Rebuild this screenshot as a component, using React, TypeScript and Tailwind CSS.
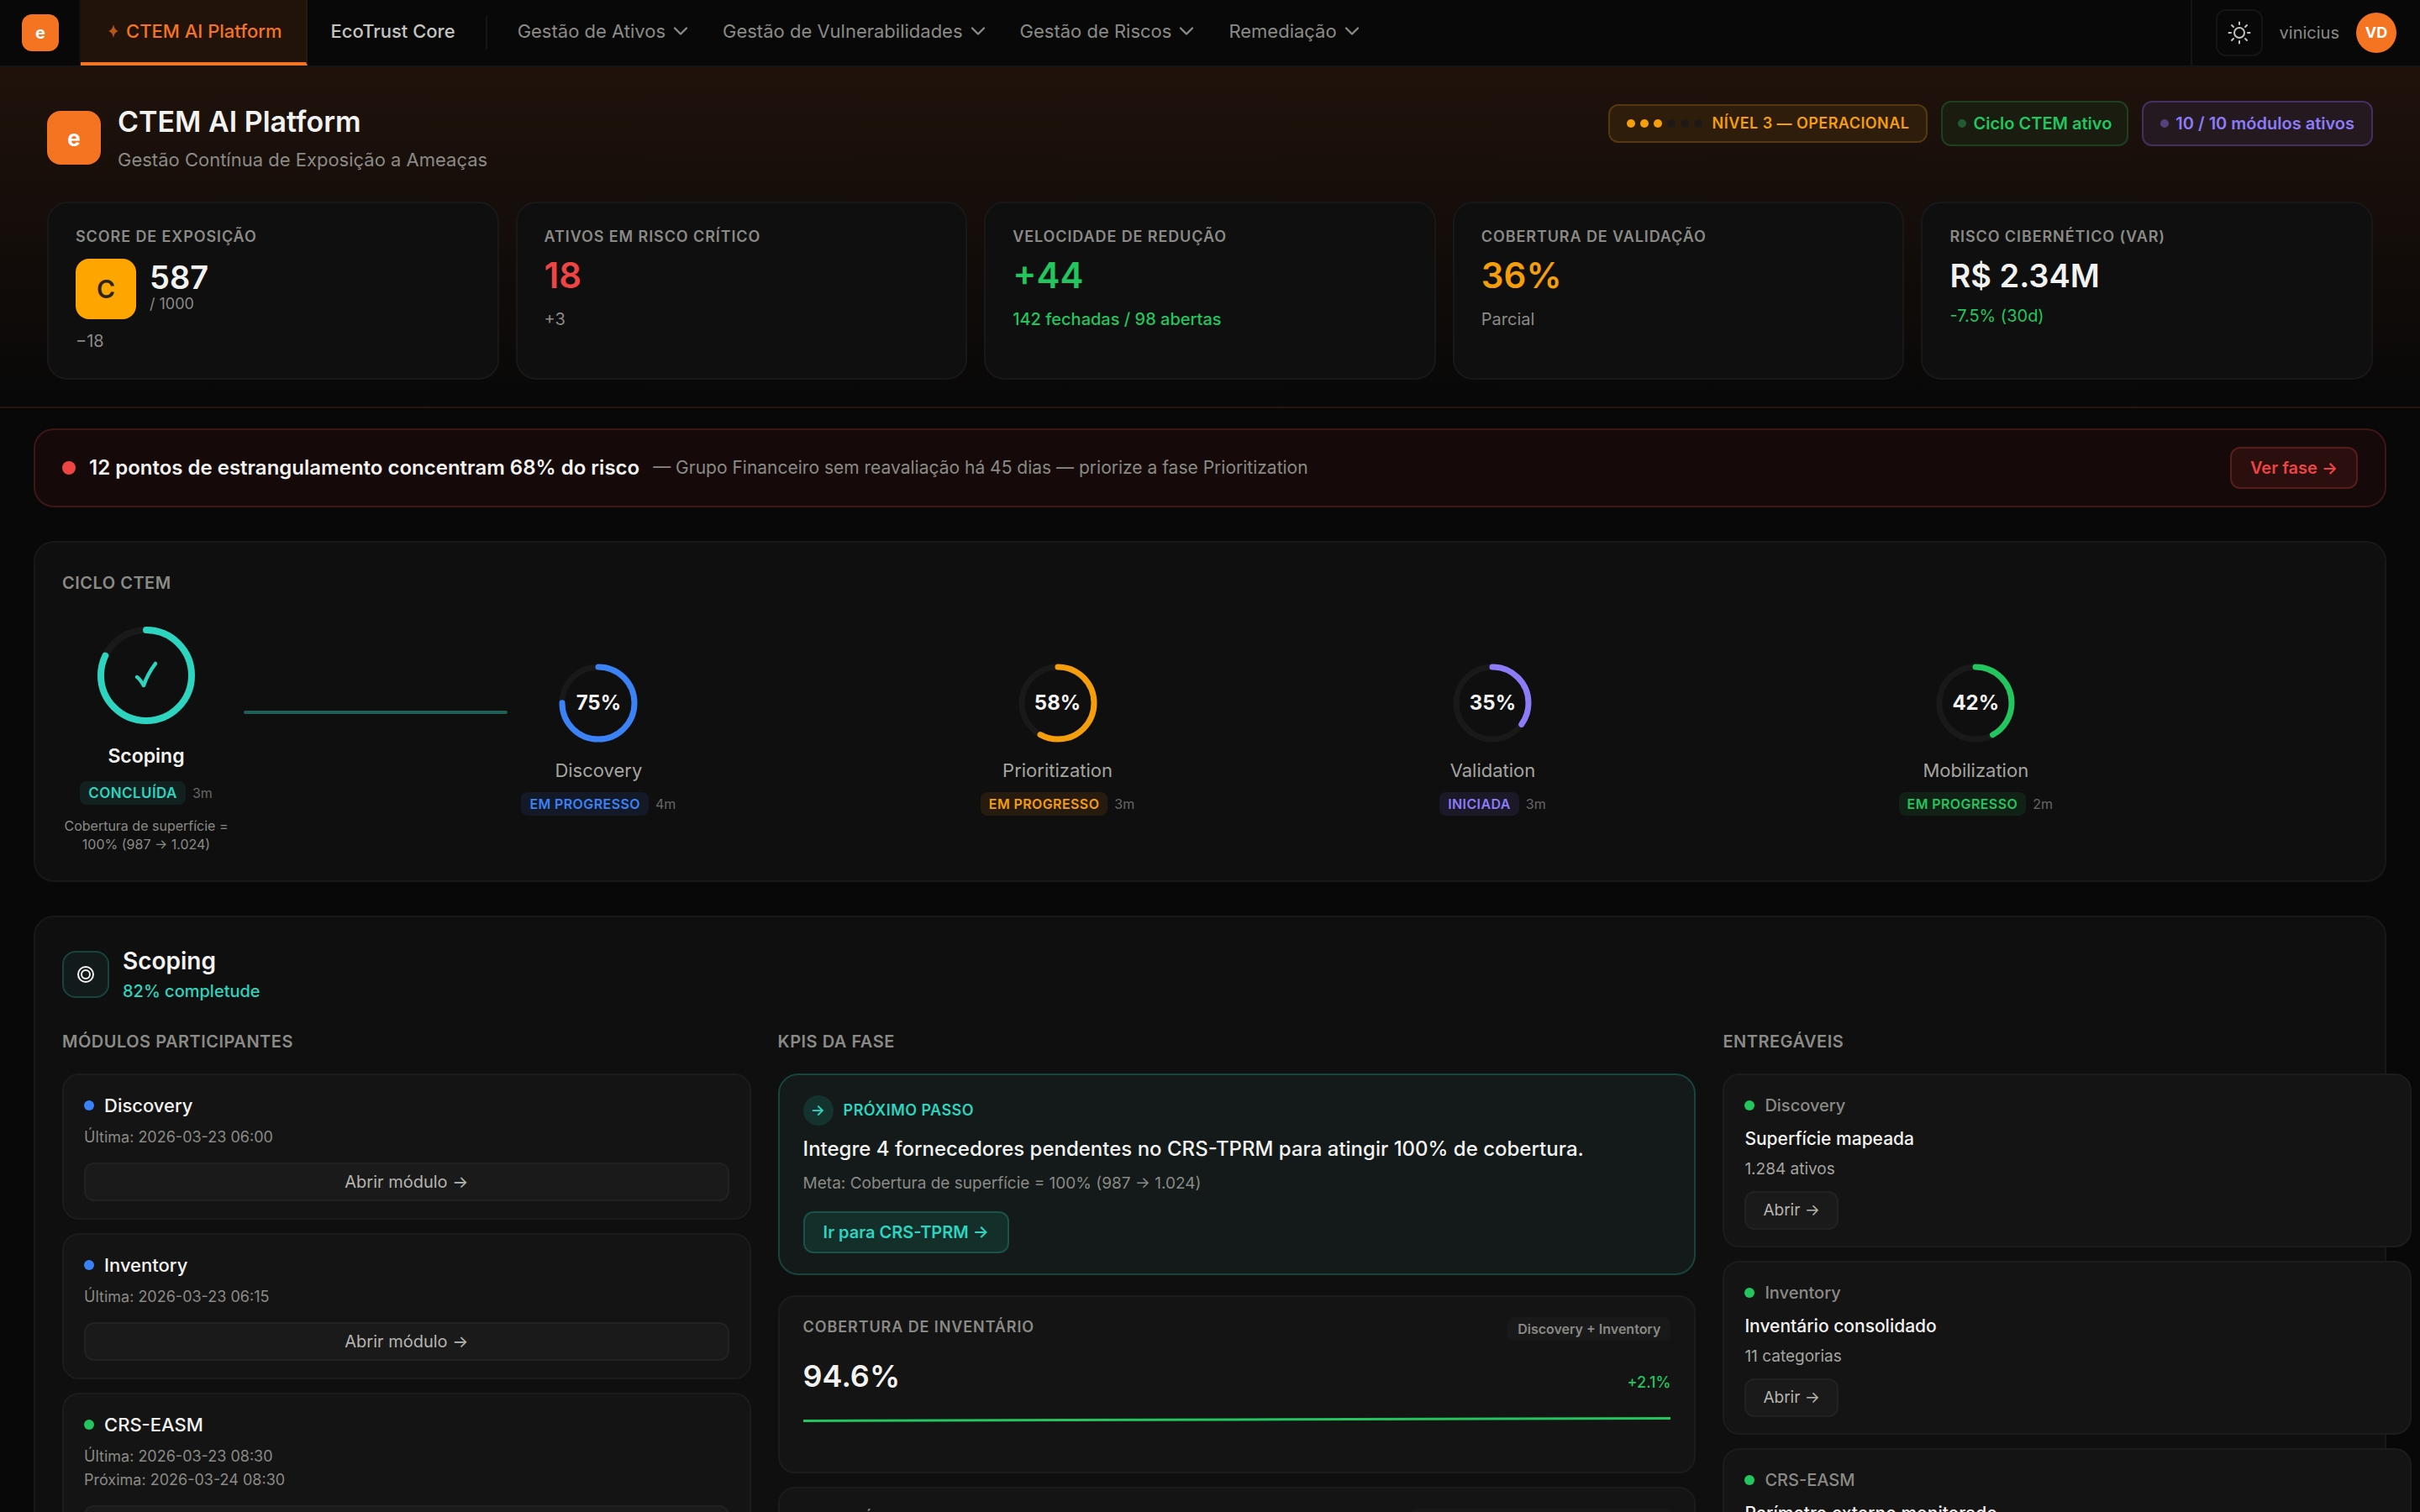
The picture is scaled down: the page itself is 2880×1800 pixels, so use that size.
import { ReactNode } from 'react';
import { ChevronDown } from 'lucide-react';

const navItems = ['Gestão de Ativos', 'Gestão de Vulnerabilidades', 'Gestão de Riscos', 'Remediação'];

interface Phase {
  name: string;
  percent: number;
  status: string;
  modules: string;
  ring: string;
  badge: string;
  note?: string;
  done?: boolean;
}

const phases: Phase[] = [
  {
    name: 'Scoping',
    percent: 82,
    status: 'Concluída',
    modules: '3m',
    ring: 'text-[#2dd4bf]',
    badge: 'bg-[#12211f] text-[#2dd4bf]',
    note: 'Cobertura de superfície = 100% (987 → 1.024)',
    done: true,
  },
  { name: 'Discovery', percent: 75, status: 'Em progresso', modules: '4m', ring: 'text-[#3b82f6]', badge: 'bg-[#131927] text-[#3b82f6]' },
  { name: 'Prioritization', percent: 58, status: 'Em progresso', modules: '3m', ring: 'text-[#f59e0b]', badge: 'bg-[#261b0e] text-[#f59e0b]' },
  { name: 'Validation', percent: 35, status: 'Iniciada', modules: '3m', ring: 'text-[#8b7cf8]', badge: 'bg-[#1b1828] text-[#8b7cf8]' },
  { name: 'Mobilization', percent: 42, status: 'Em progresso', modules: '2m', ring: 'text-[#22c55e]', badge: 'bg-[#112116] text-[#22c55e]' },
];

const modules = [
  { name: 'Discovery', dot: 'bg-[#3b82f6]', dates: ['Última: 2026-03-23 06:00'] },
  { name: 'Inventory', dot: 'bg-[#3b82f6]', dates: ['Última: 2026-03-23 06:15'] },
  { name: 'CRS-EASM', dot: 'bg-[#22c55e]', dates: ['Última: 2026-03-23 08:30', 'Próxima: 2026-03-24 08:30'] },
];

const kpis = [
  { label: 'Cobertura de inventário', source: 'Discovery + Inventory', value: '94.6%', delta: '+2.1%' },
  { label: 'Superfície externa', source: 'CRS-EASM + CRS-TPRM + Discovery', value: '38', delta: '+4' },
];

const deliverables = [
  { module: 'Discovery', title: 'Superfície mapeada', detail: '1.284 ativos' },
  { module: 'Inventory', title: 'Inventário consolidado', detail: '11 categorias' },
  { module: 'CRS-EASM', title: 'Perímetro externo monitorado', detail: '38 domínios' },
];

function SunIcon() {
  return (
    <svg width="28" height="28" viewBox="0 0 28 28" fill="none" stroke="currentColor" strokeWidth="2" strokeLinecap="round">
      <circle cx="14" cy="14" r="6" />
      <path d="M14 1.500v2.500M14 24v2.500M1.500 14h2.500M24 14h2.500M5 5l2 2M21 21l2 2M5 23l2-2M21 7l2-2" />
    </svg>
  );
}

function SiteHeader() {
  return (
    <header className="flex h-20 items-stretch border-b-2 border-[#151515] bg-[#080808]">
      <div className="flex items-center border-r-2 border-[#111111] pr-6 pl-[26px]">
        <span className="flex size-11 items-center justify-center rounded-xl bg-[#f47421] text-xl font-bold text-white">e</span>
      </div>
      <nav className="flex items-stretch text-[22px]">
        <a href="#ctem" className="flex items-center gap-2 border-r-2 border-b-4 border-r-[#2b1a10] border-b-[#f47421] bg-[#22130a] pr-7 pl-8 font-medium text-[#f47421]">
          <svg width="14" height="18" viewBox="0 0 14 18" fill="currentColor" className="opacity-70">
            <path d="M7 1c1 4.500 2.200 6.700 6 8-3.800 1.300-5 3.500-6 8-1-4.500-2.200-6.700-6-8 3.800-1.300 5-3.500 6-8z" />
          </svg>
          CTEM AI Platform
        </a>
        <a href="#core" className="flex items-center pr-9 pb-1 pl-7 font-medium text-[#c4c4c0]">EcoTrust Core</a>
        <span className="h-10 w-0.5 self-center bg-[#151515]" />
        <div className="flex items-stretch gap-9 pl-9">
          {navItems.map((item) => (
            <button key={item} className="flex items-center gap-1 pb-1 text-[#8a8a86]">
              {item}
              <ChevronDown className="size-7" strokeWidth={2} />
            </button>
          ))}
        </div>
      </nav>
      <div className="ml-auto flex items-center gap-5 border-l-2 border-[#151515] pr-7 pl-7">
        <button aria-label="Alternar tema" className="flex size-14 items-center justify-center rounded-xl border-2 border-[#151515] text-[#c4c4c0]">
          <SunIcon />
        </button>
        <span className="text-xl text-[#8a8a86]">vinicius</span>
        <span className="flex size-12 items-center justify-center rounded-full bg-[#f47421] text-lg font-bold text-white">VD</span>
      </div>
    </header>
  );
}

function HeroBadges() {
  return (
    <div className="flex items-center gap-4">
      <div className="flex h-[46px] items-center gap-3 rounded-xl border-2 border-[#54380f] bg-[#2f1d0c] px-5 text-[#f59e0b]">
        <span className="flex gap-1.5">
          {[1, 2, 3, 4, 5, 6].map((level) => (
            <span key={level} className={`size-2.5 rounded-full ${level <= 3 ? 'bg-[#f59e0b]' : 'bg-[#1f1a17]'}`} />
          ))}
        </span>
        <span className="text-lg font-semibold tracking-wide">NÍVEL 3 — OPERACIONAL</span>
      </div>
      <div className="flex h-[54px] items-center gap-2 rounded-xl border-2 border-[#1d4023] bg-[#1b1c10] px-[18px] text-xl font-semibold text-[#22c55e]">
        <span className="size-2.5 rounded-full bg-[#225a32]" />
        Ciclo CTEM ativo
      </div>
      <div className="flex h-[54px] items-center gap-2 rounded-xl border-2 border-[#423060] bg-[#251920] px-5 text-xl font-semibold text-[#8b7cf8]">
        <span className="size-2.5 rounded-full bg-[#54407a]" />
        10 / 10 módulos ativos
      </div>
    </div>
  );
}

function StatCard({ label, children }: { label: string; children: ReactNode }) {
  return (
    <article className="min-h-[212px] rounded-3xl border-2 border-[#181818] bg-[#0f0f0f] px-8 pt-6">
      <h2 className="text-lg leading-8 font-semibold tracking-wider text-[#8a8a86] uppercase">{label}</h2>
      {children}
    </article>
  );
}

function Hero() {
  return (
    <section className="border-b-2 border-[#22180f] bg-linear-to-b from-[#20120b] to-[#080808] px-14 pt-10 pb-8">
      <div className="flex min-h-22 items-start justify-between">
        <div className="flex items-center gap-5 pt-0.5">
          <span className="flex size-16 items-center justify-center rounded-2xl bg-[#f47421] text-[26px] font-bold text-white">e</span>
          <div>
            <h1 className="text-[34px] leading-[46px] font-semibold text-[#f2f2f0]">CTEM AI Platform</h1>
            <p className="pt-1.5 text-[22px] leading-8 text-[#8a8a86]">Gestão Contínua de Exposição a Ameaças</p>
          </div>
        </div>
        <HeroBadges />
      </div>
      <div className="mt-8 grid grid-cols-5 gap-5">
        <StatCard label="Score de exposição">
          <div className="mt-2.5 flex items-center gap-4">
            <span className="flex size-[72px] items-center justify-center rounded-2xl bg-[#ffa500] text-3xl font-semibold text-[#2b2410]">C</span>
            <div>
              <p className="text-[38px] leading-9 font-semibold text-[#f2f2f0]">587</p>
              <p className="text-lg leading-7 text-[#8a8a86]">/ 1000</p>
            </div>
          </div>
          <p className="mt-2.5 text-xl leading-8 text-[#8a8a86]">−18</p>
        </StatCard>
        <StatCard label="Ativos em risco crítico">
          <p className="mt-1 text-[42px] leading-[52px] font-semibold text-[#ef4444]">18</p>
          <p className="mt-2.5 text-xl leading-8 text-[#8a8a86]">+3</p>
        </StatCard>
        <StatCard label="Velocidade de redução">
          <p className="mt-1 text-[42px] leading-[52px] font-semibold text-[#22c55e]">+44</p>
          <p className="mt-2.5 text-xl leading-8 font-medium text-[#22c55e]">142 fechadas / 98 abertas</p>
        </StatCard>
        <StatCard label="Cobertura de validação">
          <p className="mt-1 text-[42px] leading-[52px] font-semibold text-[#f59e0b]">36%</p>
          <p className="mt-2.5 text-xl leading-8 text-[#8a8a86]">Parcial</p>
        </StatCard>
        <StatCard label="Risco cibernético (VaR)">
          <p className="mt-1 text-[38px] leading-[52px] font-semibold text-[#f2f2f0]">R$ 2.34M</p>
          <p className="mt-1.5 text-xl leading-8 text-[#22c55e]">-7.5% (30d)</p>
        </StatCard>
      </div>
    </section>
  );
}

function AlertBar() {
  return (
    <section className="flex items-center rounded-3xl border-2 border-[#3d1716] bg-[#150a09] px-8 py-5">
      <span className="size-4 rounded-full bg-[#ef4444]" />
      <strong className="ml-4 text-2xl font-semibold text-[#f2f2f0]">12 pontos de estrangulamento concentram 68% do risco</strong>
      <span className="ml-4 text-[21px] text-[#8a8a86]">— Grupo Financeiro sem reavaliação há 45 dias — priorize a fase Prioritization</span>
      <button className="ml-auto h-[50px] rounded-xl border-2 border-[#571d1c] bg-[#2a0f0e] px-5.5 text-xl font-semibold text-[#ef4444]">Ver fase →</button>
    </section>
  );
}

function ProgressRing({ phase }: { phase: Phase }) {
  const size = phase.done ? 120 : 96;
  const stroke = phase.done ? 8 : 7;
  const radius = phase.done ? 54 : 43;
  const length = 2 * Math.PI * radius;

  return (
    <div className={`relative ${phase.ring}`}>
      <svg width={size} height={size} viewBox={`0 0 ${size} ${size}`} fill="none">
        <circle cx={size / 2} cy={size / 2} r={radius} stroke="#191919" strokeWidth={stroke} />
        <circle
          cx={size / 2}
          cy={size / 2}
          r={radius}
          stroke="currentColor"
          strokeWidth={stroke}
          strokeLinecap="round"
          strokeDasharray={`${(length * phase.percent) / 100} ${length}`}
          transform={`rotate(-90 ${size / 2} ${size / 2})`}
        />
        {phase.done && <path d="M49 62c3 2 5 5 8 10 3-9 8-18 14-26" stroke="currentColor" strokeWidth="4.500" strokeLinecap="round" strokeLinejoin="round" />}
      </svg>
      {!phase.done && (
        <span className="absolute inset-0 flex items-center justify-center text-2xl font-bold text-[#f2f2f0]">{phase.percent}%</span>
      )}
    </div>
  );
}

function PhaseStep({ phase }: { phase: Phase }) {
  return (
    <li className="flex items-center">
      <button className="flex max-w-[200px] flex-col items-center">
        <ProgressRing phase={phase} />
        <span className={`mt-4 ${phase.done ? 'text-[23px] leading-10 font-semibold text-[#f2f2f0]' : 'text-[22px] leading-8 text-[#a5a5a0]'}`}>
          {phase.name}
        </span>
        <span className="mt-2.5 flex items-center gap-2">
          <span className={`rounded-lg px-2.5 leading-7 font-semibold tracking-wide whitespace-nowrap uppercase ${phase.done ? 'text-[17px]' : 'text-base'} ${phase.badge}`}>
            {phase.status}
          </span>
          <span className="text-base text-[#666666]">{phase.modules}</span>
        </span>
        {phase.note && <span className="mt-3.5 text-base leading-[22px] text-[#8a8a86]">{phase.note}</span>}
      </button>
      {phase.done && <span className="mx-4 mb-16 h-1 flex-1 rounded-full bg-[#1f5f56]" />}
    </li>
  );
}

function CyclePanel() {
  return (
    <section className="rounded-3xl border-2 border-[#181818] bg-[#0f0f0f] p-8">
      <h2 className="text-xl leading-8 font-semibold tracking-wide text-[#8a8a86]">CICLO CTEM</h2>
      <ol className="mt-8.5 grid grid-cols-5">
        {phases.map((phase) => (
          <PhaseStep key={phase.name} phase={phase} />
        ))}
      </ol>
    </section>
  );
}

function ColumnTitle({ children }: { children: ReactNode }) {
  return <h3 className="mb-5.5 text-xl leading-8 font-semibold tracking-wide text-[#8a8a86] uppercase">{children}</h3>;
}

function ModulesColumn() {
  return (
    <div>
      <ColumnTitle>Módulos participantes</ColumnTitle>
      <div className="flex flex-col gap-4">
        {modules.map((item) => (
          <article key={item.name} className="rounded-[20px] border-2 border-[#1c1c1c] bg-[#141414] px-6 py-5">
            <h4 className="flex items-center gap-3 text-[22px] leading-8 font-medium text-[#f2f2f0]">
              <span className={`size-3 rounded-full ${item.dot}`} />
              {item.name}
            </h4>
            <div className="mt-2 mb-4 text-lg leading-7 text-[#8a8a86]">
              {item.dates.map((date) => (
                <p key={date}>{date}</p>
              ))}
            </div>
            <button className="h-[46px] w-full rounded-xl border-2 border-[#222222] bg-[#1a1a1a] text-xl text-[#b5b5b0]">Abrir módulo →</button>
          </article>
        ))}
      </div>
    </div>
  );
}

function KpiColumn() {
  return (
    <div>
      <ColumnTitle>KPIs da fase</ColumnTitle>
      <article className="rounded-3xl border-2 border-[#17443d] bg-[#131a19] px-7 py-6">
        <p className="flex items-center gap-3 text-lg font-semibold tracking-wide text-[#2dd4bf]">
          <span className="flex size-9 items-center justify-center rounded-full bg-[#14332e]">→</span>
          PRÓXIMO PASSO
        </p>
        <p className="mt-2 text-2xl leading-10 font-medium text-[#f2f2f0]">Integre 4 fornecedores pendentes no CRS-TPRM para atingir 100% de cobertura.</p>
        <p className="mt-1 text-[19px] leading-[34px] text-[#8a8a86]">Meta: Cobertura de superfície = 100% (987 → 1.024)</p>
        <button className="mt-4 h-[50px] rounded-xl border-2 border-[#1a5148] bg-[#142e2a] px-5.5 text-xl font-semibold text-[#2dd4bf]">Ir para CRS-TPRM →</button>
      </article>
      <div className="mt-6 flex flex-col gap-4">
        {kpis.map((kpi) => (
          <article key={kpi.label} className="rounded-[20px] border-2 border-[#1c1c1c] bg-[#141414] px-7 pt-6 pb-7">
            <div className="flex items-start justify-between">
              <h4 className="text-lg leading-6 font-semibold tracking-wider text-[#8a8a86] uppercase">{kpi.label}</h4>
              <span className="rounded-lg bg-[#191919] px-3 text-base leading-7 font-semibold text-[#8a8a86]">{kpi.source}</span>
            </div>
            <div className="mt-4 flex items-end justify-between">
              <span className="text-4xl leading-[52px] font-semibold text-[#f2f2f0]">{kpi.value}</span>
              <span className="text-lg leading-9 font-medium text-[#22c55e]">{kpi.delta}</span>
            </div>
            <svg className="mt-1 h-14 w-full" viewBox="0 0 1032 56" preserveAspectRatio="none" fill="none">
              <path d="M0 23.500L516 22L1032 20.500" stroke="#22c55e" strokeWidth="3" />
            </svg>
          </article>
        ))}
      </div>
    </div>
  );
}

function DeliverablesColumn() {
  return (
    <div>
      <ColumnTitle>Entregáveis</ColumnTitle>
      <div className="flex flex-col gap-4">
        {deliverables.map((item) => (
          <article key={item.title} className="rounded-[20px] border-2 border-[#1c1c1c] bg-[#141414] px-6 pt-5 pb-[19px]">
            <p className="flex items-center gap-3 text-xl leading-8 font-medium text-[#8a8a86]">
              <span className="size-3 rounded-full bg-[#22c55e]" />
              {item.module}
            </p>
            <h4 className="mt-2 text-[21px] leading-8 font-medium text-[#f2f2f0]">{item.title}</h4>
            <p className="mt-1 text-[19px] leading-8 text-[#a5a5a0]">{item.detail}</p>
            <button className="mt-2.5 block h-[46px] rounded-xl border-2 border-[#222222] bg-[#1a1a1a] px-5 text-[19px] text-[#b5b5b0]">Abrir →</button>
          </article>
        ))}
      </div>
    </div>
  );
}

function PhasePanel() {
  return (
    <section className="rounded-3xl border-2 border-[#181818] bg-[#0f0f0f] px-8 pt-8 pb-8">
      <div className="flex items-center gap-4">
        <span className="flex size-14 items-center justify-center rounded-2xl border-2 border-[#17443d] bg-[#121b1a]">
          <svg width="22" height="22" viewBox="0 0 22 22" fill="none" stroke="#f2f2f0" strokeWidth="2">
            <circle cx="11" cy="11" r="9" />
            <circle cx="11" cy="11" r="5" />
          </svg>
        </span>
        <div>
          <h2 className="text-[28px] leading-10 font-semibold text-[#f2f2f0]">Scoping</h2>
          <p className="text-xl leading-8 font-medium text-[#2dd4bf]">82% completude</p>
        </div>
      </div>
      {/* columns are 30/40/30 plus gaps, so the last one runs past the panel */}
      <div className="mt-7 grid grid-cols-[30%_40%_30%] gap-8">
        <ModulesColumn />
        <KpiColumn />
        <DeliverablesColumn />
      </div>
    </section>
  );
}

export default function App() {
  return (
    <div className="h-screen overflow-hidden bg-[#080808] font-['Inter',sans-serif]">
      <SiteHeader />
      <Hero />
      <main className="flex flex-col gap-10 px-10 py-6">
        <AlertBar />
        <CyclePanel />
        <PhasePanel />
      </main>
    </div>
  );
}
